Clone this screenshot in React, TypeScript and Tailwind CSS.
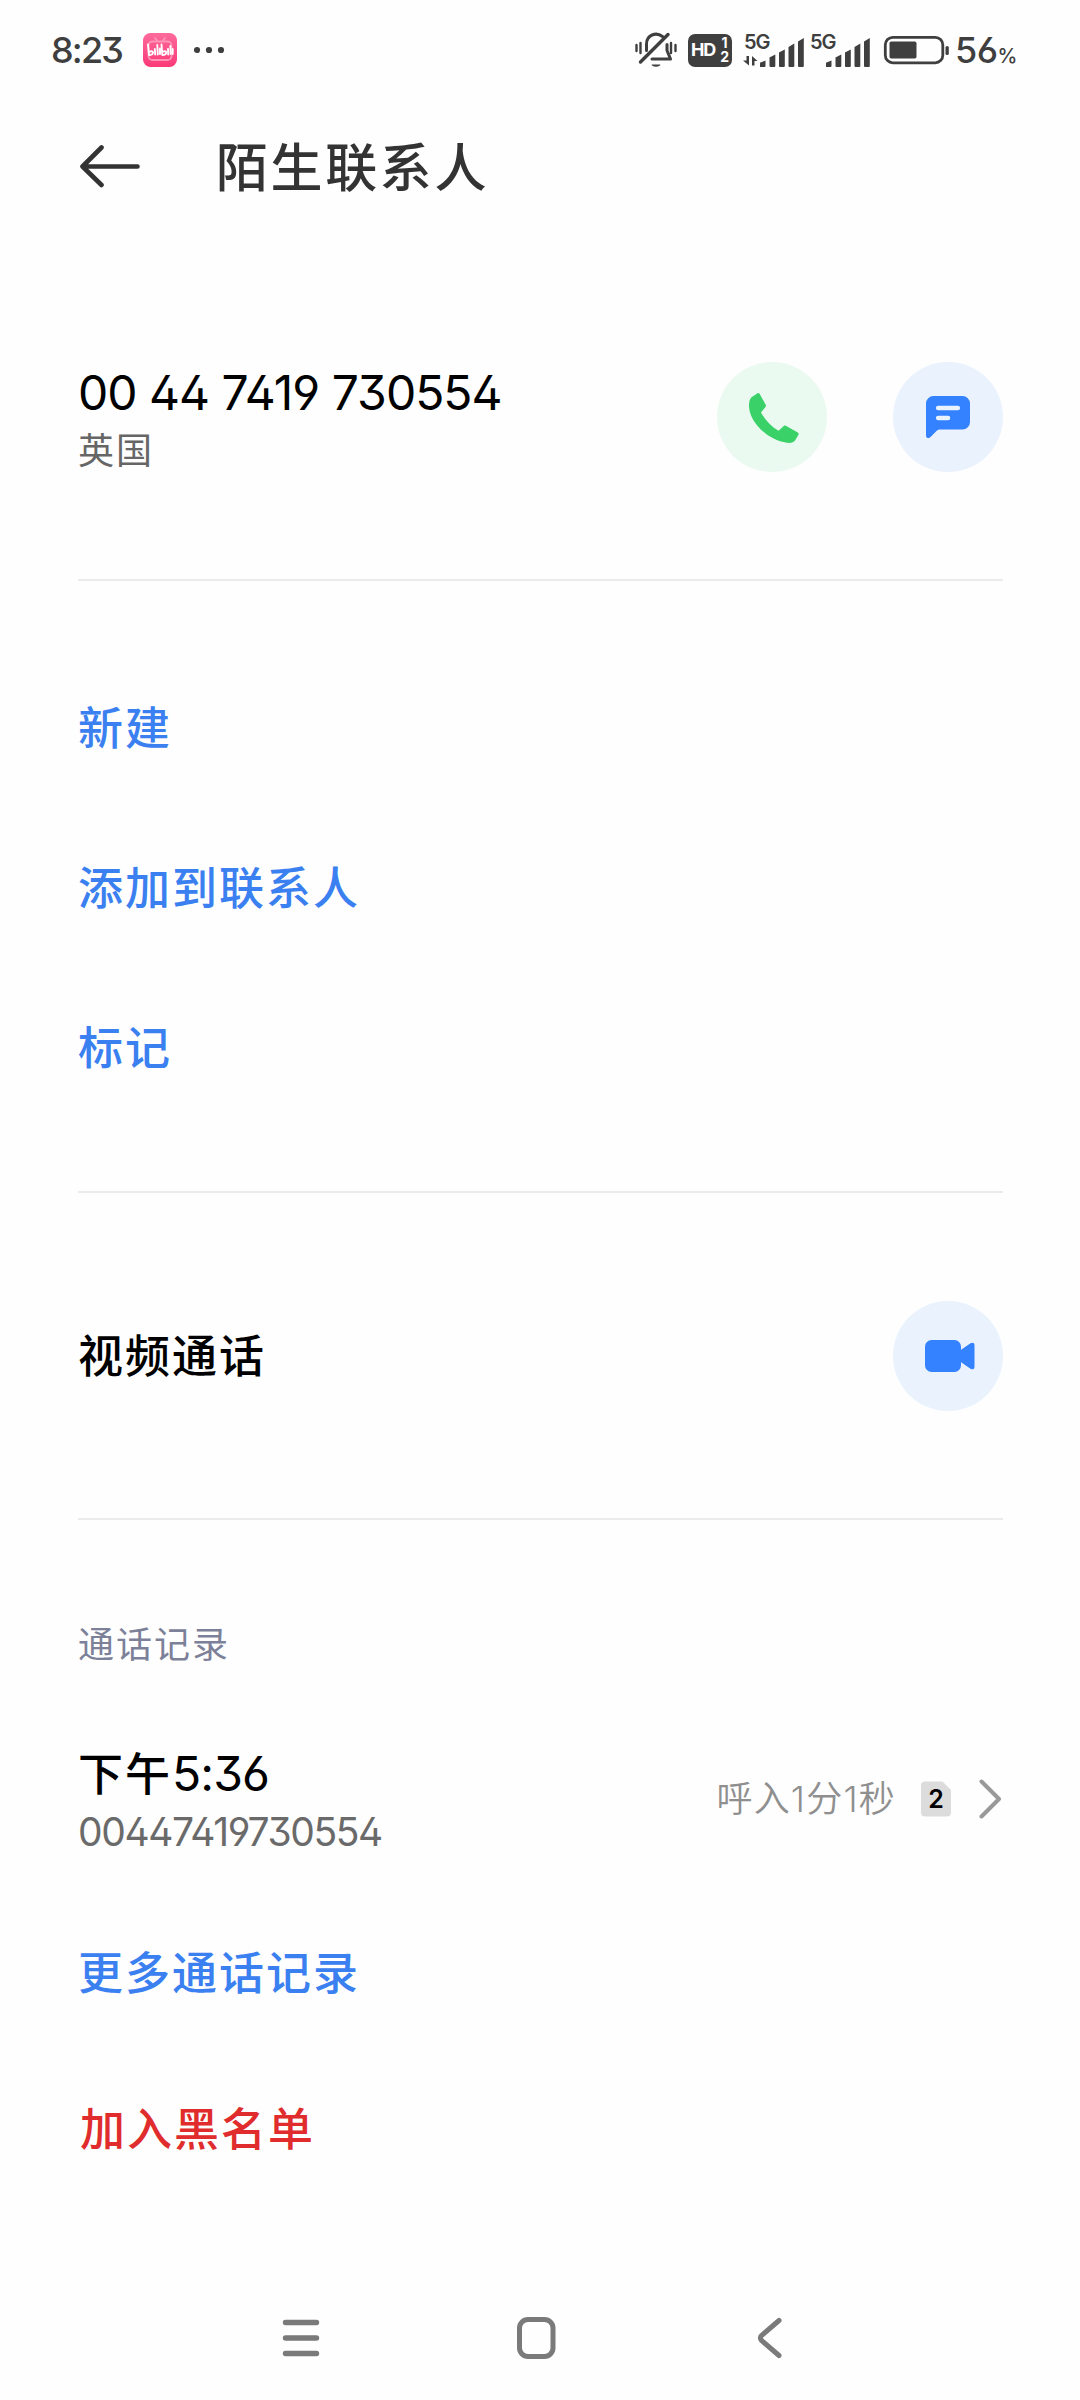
import type { ReactNode } from 'react'

const actions = ['新建', '添加到联系人', '标记']

function SignalBars() {
  return (
    <svg width="46" height="30" viewBox="0 0 46 30" fill="#3f3f3f">
      <path d="M1 30v-3.500a1.200 1.200 0 0 1 1.200-1.200L6.500 23.500V29a1 1 0 0 1-1 1z" />
      <path d="M10.500 20.500L16.300 17.500V29a1 1 0 0 1-1 1h-3.800a1 1 0 0 1-1-1z" />
      <path d="M20 15.500L25.800 12.500V29a1 1 0 0 1-1 1h-3.800a1 1 0 0 1-1-1z" />
      <path d="M29.500 10L35.300 6.500V29a1 1 0 0 1-1 1h-3.800a1 1 0 0 1-1-1z" />
      <path d="M39 4.500L44.800 1V29a1 1 0 0 1-1 1h-3.800a1 1 0 0 1-1-1z" />
    </svg>
  )
}

function StatusBar() {
  return (
    <header className="flex h-[100px] items-center pl-[51px] text-[#3f3f3f]">
      <span className="w-[91px] text-[36px] leading-none font-medium tracking-[-1.8px]">8:23</span>
      <svg className="mr-[16px]" width="36" height="36" viewBox="0 0 36 36">
        <defs>
          <linearGradient id="tv" x1="0" y1="0" x2="0" y2="1">
            <stop offset="0" stopColor="#fd6a9b" />
            <stop offset="1" stopColor="#fb3a78" />
          </linearGradient>
        </defs>
        <rect x="1" y="1" width="34" height="34" rx="7.500" fill="url(#tv)" />
        <g fill="none" stroke="#ff94b6" strokeWidth="1.800" strokeLinecap="round">
          <rect x="6.500" y="9.500" width="23" height="18.500" rx="4" />
          <path d="M13 6l2.500 3M23 6l-2.500 3" />
        </g>
        <g fill="none" stroke="#fff" strokeWidth="1.900" strokeLinecap="round" strokeLinejoin="round">
          <path d="M6 12.500l1 10.500c2.200 0 4.300-1 4-2.500s-2.300-1.500-4-.5" />
          <path d="M12.800 17l.4 5.500M15.300 13l.5 9.500M18 16.500v5.500" />
          <path d="M19.500 12.500l.8 10.500c2.200 0 4.300-1 4-2.500s-2.300-1.500-4-.5" />
          <path d="M26 17l.2 5.500M28.400 14l.2 8M30.700 17v5" />
        </g>
      </svg>
      <svg width="32" height="8" viewBox="0 0 32 8" fill="#3f3f3f">
        <circle cx="3" cy="4" r="3.100" />
        <circle cx="15" cy="4" r="3.100" />
        <circle cx="27" cy="4" r="3.100" />
      </svg>

      <svg className="ml-[408px]" width="44" height="38" viewBox="0 0 44 38" fill="none" stroke="#3f3f3f" strokeWidth="3" strokeLinecap="round" strokeLinejoin="round">
        <path d="M2.500 14v6M6.500 12v10M37 12v10M41.500 14v6" strokeWidth="2.400" />
        <path d="M28.500 5.500C22 .5 12.500 4 12.500 13v6.500M33 13.500v6l3.500 8.500H18" />
        <path d="M6.500 31L34 3.500" strokeWidth="3.400" />
        <path d="M17.500 33.500h9c-1 3-8 3-9 0z" fill="#3f3f3f" stroke="none" />
      </svg>
      <span className="ml-[10px] flex h-[33px] w-[44px] items-center justify-between rounded-[7px] bg-[#3f3f3f] pr-[3px] pl-[3px] text-[18px] leading-none font-bold text-white">
        <span className="tracking-[-1.2px]">HD</span>
        <span className="flex flex-col items-center text-[14px] leading-[14px]">
          <span>1</span>
          <span>2</span>
        </span>
      </span>

      <span className="relative ml-[11px] flex h-[34px] w-[62px] items-end justify-end">
        <span className="absolute top-[2px] left-[1px] text-[20px] leading-[14px] font-semibold tracking-[-1px]">5G</span>
        <svg className="absolute bottom-[1px] left-0" width="15" height="10" viewBox="0 0 15 10" fill="#3f3f3f">
          <path d="M3.500 0h2.500v9.500L0 4.500h3.500zM9 0l5.500 5H11.500v4.500H9z" />
        </svg>
        <SignalBars />
      </span>
      <span className="relative ml-[4px] flex h-[34px] w-[62px] items-end justify-end">
        <span className="absolute top-[2px] left-[1px] text-[20px] leading-[14px] font-semibold tracking-[-1px]">5G</span>
        <SignalBars />
      </span>

      <svg className="ml-[12px]" width="68" height="30" viewBox="0 0 68 30">
        <rect x="2.300" y="2.300" width="57.500" height="25.500" rx="7.500" fill="none" stroke="#3f3f3f" strokeWidth="2.800" />
        <rect x="6.500" y="6.500" width="27" height="17" rx="1.800" fill="#3f3f3f" />
        <rect x="62.500" y="11" width="3.300" height="9" rx="1.600" fill="#3f3f3f" />
      </svg>
      <span className="ml-[4px] flex items-baseline text-[36px] leading-none font-medium tracking-[-0.5px]">
        56<span className="text-[20px] font-medium tracking-normal">%</span>
      </span>
    </header>
  )
}

function RoundButton({ label, className, children }: { label: string; className: string; children: ReactNode }) {
  return (
    <button aria-label={label} className={`flex size-[110px] shrink-0 items-center justify-center rounded-full ${className}`}>
      {children}
    </button>
  )
}

export default function App() {
  return (
    <div className="flex h-[2400px] w-[1080px] flex-col bg-[#fefefe] font-['Inter','Noto_Sans_CJK_SC',sans-serif] text-[45px] text-black [font-feature-settings:'cv03','cv04','cv09','ss01']">
      <StatusBar />

      <div className="flex h-[132px] items-center pl-[78px]">
        <svg width="64" height="44" viewBox="0 0 64 44" fill="none" stroke="#333" strokeWidth="4.600" strokeLinecap="round" strokeLinejoin="round">
          <path d="M59.500 22.500H4.500M23.500 3.500L4.500 22.500l19 18.500" />
        </svg>
        <h1 className="ml-[74px] pt-[5px] text-[52px] font-[450] tracking-[2.6px] text-[#333]">陌生联系人</h1>
      </div>

      <main className="flex flex-col pr-[77px] pl-[78px]">
        <section className="flex h-[349px] items-start border-b-2 border-[#ebebeb] pt-[130px]">
          <div className="flex-1">
            <div className="h-[61px] text-[48px] leading-[62px] tracking-[-1px]">00 44 7419 730554</div>
            <div className="text-[36px] leading-[57px] tracking-[2px] text-[#666]">英国</div>
          </div>
          <div className="flex gap-[66px]">
            <RoundButton label="拨打电话" className="bg-[#ebfaf0]">
              <svg className="mt-[1px] ml-[4px]" width="50" height="50" viewBox="0 0 50 50" fill="#3ad168">
                <path d="M0 13C0 8 1 5 4 3.200L8.500.3c.8-.4 1.700-.2 2.200.6L16.800 12c.3.700.2 1.400-.3 2L12 19.500C16 27 22 33.500 29.500 37.800l5.300-4.800c.6-.5 1.300-.6 2-.2L48.800 39.500c.8.500 1.100 1.400.7 2.200l-3 5C45 49.500 42 50.200 38 49.800 18 47.500 0 28 0 13z" />
              </svg>
            </RoundButton>
            <RoundButton label="发送信息" className="bg-[#eaf2fe]">
              <svg width="44" height="42" viewBox="0 0 44 42">
                <path d="M7.500 0h29A7.500 7.500 0 0 1 44 7.500V26a7.500 7.500 0 0 1-7.500 7.500H14c-1.500 0-2.500.5-3.500 1.500l-6 6C2.500 43 0 42 0 39.500v-32A7.500 7.500 0 0 1 7.500 0z" fill="#3482ff" />
                <path d="M12.200 12h19.600M12.200 22h9.800" stroke="#eaf2fe" strokeWidth="4.600" strokeLinecap="round" />
              </svg>
            </RoundButton>
          </div>
        </section>

        <section className="flex h-[612px] flex-col border-b-2 border-[#ebebeb] pt-[68px] font-[450] tracking-[2px] text-[#3a80f0]">
          {actions.map((label) => (
            <button key={label} className="flex h-[160px] items-center">
              {label}
            </button>
          ))}
        </section>

        <section className="flex h-[327px] items-center border-b-2 border-[#ebebeb]">
          <span className="flex-1 pt-[3px] font-[450] tracking-[2px]">视频通话</span>
          <RoundButton label="视频通话" className="bg-[#eaf2fe]">
            <svg className="ml-[4px]" width="50" height="32" viewBox="0 0 50 32" fill="#3482ff">
              <rect width="36" height="32" rx="6.500" />
              <path d="M35 10.500l10.500-7.200C47.500 2 49.500 2.800 49.500 5v22c0 2.200-2 3-4 1.700L35 21.500z" />
            </svg>
          </RoundButton>
        </section>

        <section className="flex flex-col">
          <h2 className="flex h-[246px] items-center pt-[3px] text-[36px] tracking-[2px] text-[#7c8098]">通话记录</h2>
          <div className="mt-[-27px] flex h-[120px] items-center">
            <div className="flex-1">
              <div className="leading-[64px]">
                <span className="font-[450] tracking-[2px]">下午</span>
                <span className="text-[48px] tracking-[-0.9px]">5:36</span>
              </div>
              <div className="text-[39px] leading-[50px] tracking-[-1.4px] text-[#6a6a6a]">00447419730554</div>
            </div>
            <span className="text-[36px] font-[350] tracking-[1.2px] text-[#8f8f8f]">呼入1分1秒</span>
            <span className="relative ml-[25px] flex h-[36px] w-[30px] items-center justify-center text-[25px] leading-none font-semibold">
              <svg className="absolute inset-0" width="30" height="36" viewBox="0 0 30 36" fill="#dcdcdc">
                <path d="M4 .5h17.500L30 9v22.500a4 4 0 0 1-4 4H4a4 4 0 0 1-4-4v-27a4 4 0 0 1 4-4z" />
              </svg>
              <span className="relative">2</span>
            </span>
            <svg className="mr-[1px] ml-[28px]" width="23" height="40" viewBox="0 0 23 40" fill="none" stroke="#999" strokeWidth="4" strokeLinecap="round" strokeLinejoin="round">
              <path d="M2.500 2.500L20 20 2.500 37.500" />
            </svg>
          </div>
          <button className="mt-[37px] flex h-[156px] items-center font-[450] tracking-[2px] text-[#3a80f0]">更多通话记录</button>
          <button className="flex h-[156px] items-center pl-[2px] font-[450] tracking-[2px] text-[#e02c2c]">加入黑名单</button>
        </section>
      </main>

      <nav className="mt-auto flex h-[118px] items-center pb-[6px] pl-[282px]">
        <svg width="38" height="38" viewBox="0 0 38 38" stroke="#7a7a7a" strokeWidth="5.400" strokeLinecap="round">
          <path d="M3.500 3.500h31M3.500 19h31M3.500 34.500h31" />
        </svg>
        <svg className="ml-[196px]" width="40" height="42" viewBox="0 0 40 42" fill="none" stroke="#7a7a7a" strokeWidth="5">
          <rect x="3.500" y="2.500" width="33.500" height="37" rx="8.500" />
        </svg>
        <svg className="ml-[201px]" width="26" height="42" viewBox="0 0 26 42" fill="none" stroke="#7a7a7a" strokeWidth="5" strokeLinecap="round">
          <path d="M22 3.500L4.500 18.500c-1.500 1.500-1.500 3.500 0 5L22 38.500" />
        </svg>
      </nav>
    </div>
  )
}
